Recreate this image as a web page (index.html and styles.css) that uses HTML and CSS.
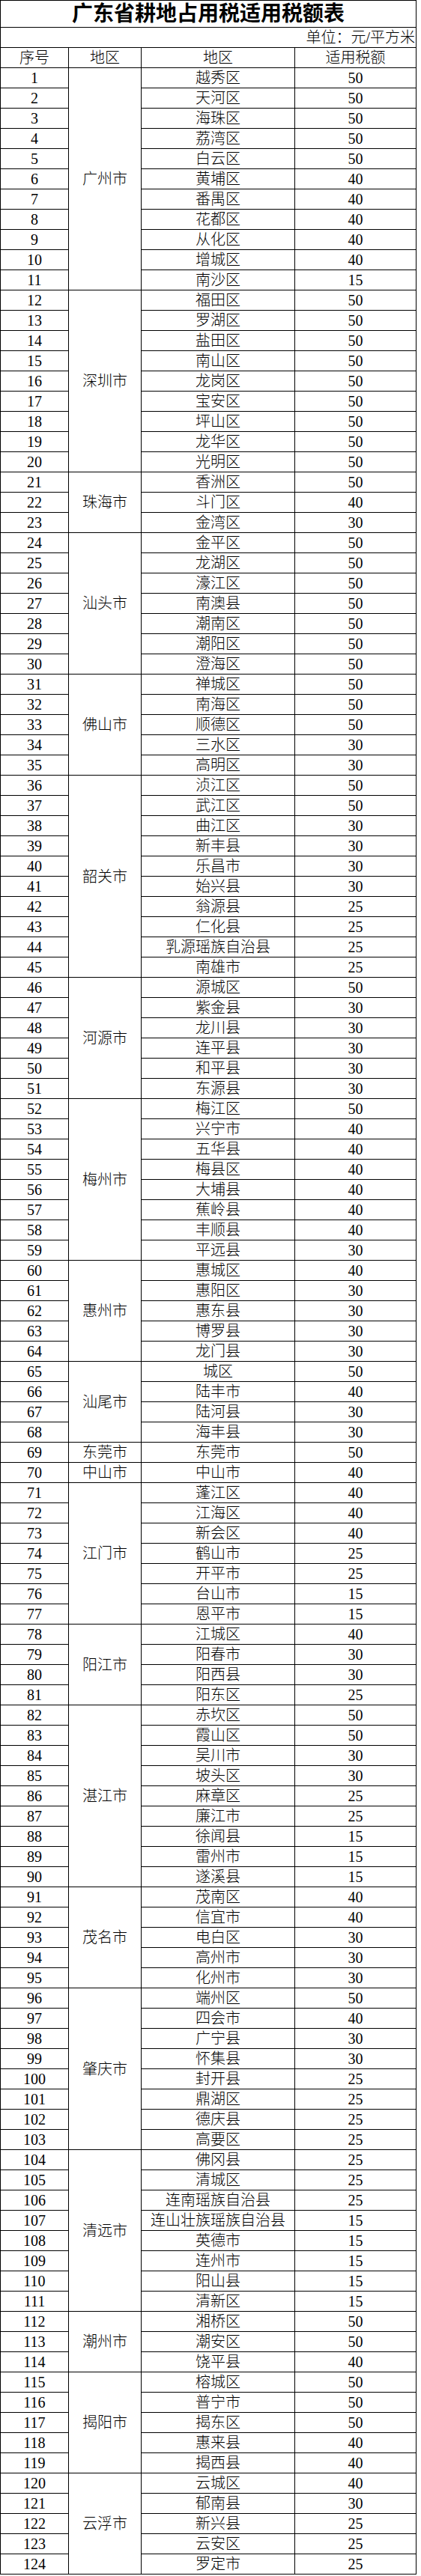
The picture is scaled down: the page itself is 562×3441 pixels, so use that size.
FILE: index.html
```html
<!DOCTYPE html>
<html lang="zh-CN">
<head>
<meta charset="utf-8">
<title>广东省耕地占用税适用税额表</title>
<link rel="stylesheet" href="styles.css">
</head>
<body>
<table class="sheet">
<colgroup><col class="c-no"><col class="c-city"><col class="c-dist"><col class="c-rate"></colgroup>
<tr class="r-title"><td colspan="4" class="title">广东省耕地占用税适用税额表</td></tr>
<tr class="r-unit"><td colspan="4" class="unit">单位：元/平方米</td></tr>
<tr class="r-head"><td>序号</td><td>地区</td><td>地区</td><td>适用税额</td></tr>
<tr><td class="num">1</td><td class="city" rowspan="11">广州市</td><td>越秀区</td><td class="num">50</td></tr>
<tr><td class="num">2</td><td>天河区</td><td class="num">50</td></tr>
<tr><td class="num">3</td><td>海珠区</td><td class="num">50</td></tr>
<tr><td class="num">4</td><td>荔湾区</td><td class="num">50</td></tr>
<tr><td class="num">5</td><td>白云区</td><td class="num">50</td></tr>
<tr><td class="num">6</td><td>黄埔区</td><td class="num">40</td></tr>
<tr><td class="num">7</td><td>番禺区</td><td class="num">40</td></tr>
<tr><td class="num">8</td><td>花都区</td><td class="num">40</td></tr>
<tr><td class="num">9</td><td>从化区</td><td class="num">40</td></tr>
<tr><td class="num">10</td><td>增城区</td><td class="num">40</td></tr>
<tr><td class="num">11</td><td>南沙区</td><td class="num">15</td></tr>
<tr><td class="num">12</td><td class="city" rowspan="9">深圳市</td><td>福田区</td><td class="num">50</td></tr>
<tr><td class="num">13</td><td>罗湖区</td><td class="num">50</td></tr>
<tr><td class="num">14</td><td>盐田区</td><td class="num">50</td></tr>
<tr><td class="num">15</td><td>南山区</td><td class="num">50</td></tr>
<tr><td class="num">16</td><td>龙岗区</td><td class="num">50</td></tr>
<tr><td class="num">17</td><td>宝安区</td><td class="num">50</td></tr>
<tr><td class="num">18</td><td>坪山区</td><td class="num">50</td></tr>
<tr><td class="num">19</td><td>龙华区</td><td class="num">50</td></tr>
<tr><td class="num">20</td><td>光明区</td><td class="num">50</td></tr>
<tr><td class="num">21</td><td class="city" rowspan="3">珠海市</td><td>香洲区</td><td class="num">50</td></tr>
<tr><td class="num">22</td><td>斗门区</td><td class="num">40</td></tr>
<tr><td class="num">23</td><td>金湾区</td><td class="num">30</td></tr>
<tr><td class="num">24</td><td class="city" rowspan="7">汕头市</td><td>金平区</td><td class="num">50</td></tr>
<tr><td class="num">25</td><td>龙湖区</td><td class="num">50</td></tr>
<tr><td class="num">26</td><td>濠江区</td><td class="num">50</td></tr>
<tr><td class="num">27</td><td>南澳县</td><td class="num">50</td></tr>
<tr><td class="num">28</td><td>潮南区</td><td class="num">50</td></tr>
<tr><td class="num">29</td><td>潮阳区</td><td class="num">50</td></tr>
<tr><td class="num">30</td><td>澄海区</td><td class="num">50</td></tr>
<tr><td class="num">31</td><td class="city" rowspan="5">佛山市</td><td>禅城区</td><td class="num">50</td></tr>
<tr><td class="num">32</td><td>南海区</td><td class="num">50</td></tr>
<tr><td class="num">33</td><td>顺德区</td><td class="num">50</td></tr>
<tr><td class="num">34</td><td>三水区</td><td class="num">30</td></tr>
<tr><td class="num">35</td><td>高明区</td><td class="num">30</td></tr>
<tr><td class="num">36</td><td class="city" rowspan="10">韶关市</td><td>浈江区</td><td class="num">50</td></tr>
<tr><td class="num">37</td><td>武江区</td><td class="num">50</td></tr>
<tr><td class="num">38</td><td>曲江区</td><td class="num">30</td></tr>
<tr><td class="num">39</td><td>新丰县</td><td class="num">30</td></tr>
<tr><td class="num">40</td><td>乐昌市</td><td class="num">30</td></tr>
<tr><td class="num">41</td><td>始兴县</td><td class="num">30</td></tr>
<tr><td class="num">42</td><td>翁源县</td><td class="num">25</td></tr>
<tr><td class="num">43</td><td>仁化县</td><td class="num">25</td></tr>
<tr><td class="num">44</td><td>乳源瑶族自治县</td><td class="num">25</td></tr>
<tr><td class="num">45</td><td>南雄市</td><td class="num">25</td></tr>
<tr><td class="num">46</td><td class="city" rowspan="6">河源市</td><td>源城区</td><td class="num">50</td></tr>
<tr><td class="num">47</td><td>紫金县</td><td class="num">30</td></tr>
<tr><td class="num">48</td><td>龙川县</td><td class="num">30</td></tr>
<tr><td class="num">49</td><td>连平县</td><td class="num">30</td></tr>
<tr><td class="num">50</td><td>和平县</td><td class="num">30</td></tr>
<tr><td class="num">51</td><td>东源县</td><td class="num">30</td></tr>
<tr><td class="num">52</td><td class="city" rowspan="8">梅州市</td><td>梅江区</td><td class="num">50</td></tr>
<tr><td class="num">53</td><td>兴宁市</td><td class="num">40</td></tr>
<tr><td class="num">54</td><td>五华县</td><td class="num">40</td></tr>
<tr><td class="num">55</td><td>梅县区</td><td class="num">40</td></tr>
<tr><td class="num">56</td><td>大埔县</td><td class="num">40</td></tr>
<tr><td class="num">57</td><td>蕉岭县</td><td class="num">40</td></tr>
<tr><td class="num">58</td><td>丰顺县</td><td class="num">40</td></tr>
<tr><td class="num">59</td><td>平远县</td><td class="num">30</td></tr>
<tr><td class="num">60</td><td class="city" rowspan="5">惠州市</td><td>惠城区</td><td class="num">40</td></tr>
<tr><td class="num">61</td><td>惠阳区</td><td class="num">30</td></tr>
<tr><td class="num">62</td><td>惠东县</td><td class="num">30</td></tr>
<tr><td class="num">63</td><td>博罗县</td><td class="num">30</td></tr>
<tr><td class="num">64</td><td>龙门县</td><td class="num">30</td></tr>
<tr><td class="num">65</td><td class="city" rowspan="4">汕尾市</td><td>城区</td><td class="num">50</td></tr>
<tr><td class="num">66</td><td>陆丰市</td><td class="num">40</td></tr>
<tr><td class="num">67</td><td>陆河县</td><td class="num">30</td></tr>
<tr><td class="num">68</td><td>海丰县</td><td class="num">30</td></tr>
<tr><td class="num">69</td><td class="city">东莞市</td><td>东莞市</td><td class="num">50</td></tr>
<tr><td class="num">70</td><td class="city">中山市</td><td>中山市</td><td class="num">40</td></tr>
<tr><td class="num">71</td><td class="city" rowspan="7">江门市</td><td>蓬江区</td><td class="num">40</td></tr>
<tr><td class="num">72</td><td>江海区</td><td class="num">40</td></tr>
<tr><td class="num">73</td><td>新会区</td><td class="num">40</td></tr>
<tr><td class="num">74</td><td>鹤山市</td><td class="num">25</td></tr>
<tr><td class="num">75</td><td>开平市</td><td class="num">25</td></tr>
<tr><td class="num">76</td><td>台山市</td><td class="num">15</td></tr>
<tr><td class="num">77</td><td>恩平市</td><td class="num">15</td></tr>
<tr><td class="num">78</td><td class="city" rowspan="4">阳江市</td><td>江城区</td><td class="num">40</td></tr>
<tr><td class="num">79</td><td>阳春市</td><td class="num">30</td></tr>
<tr><td class="num">80</td><td>阳西县</td><td class="num">30</td></tr>
<tr><td class="num">81</td><td>阳东区</td><td class="num">25</td></tr>
<tr><td class="num">82</td><td class="city" rowspan="9">湛江市</td><td>赤坎区</td><td class="num">50</td></tr>
<tr><td class="num">83</td><td>霞山区</td><td class="num">50</td></tr>
<tr><td class="num">84</td><td>吴川市</td><td class="num">30</td></tr>
<tr><td class="num">85</td><td>坡头区</td><td class="num">30</td></tr>
<tr><td class="num">86</td><td>麻章区</td><td class="num">25</td></tr>
<tr><td class="num">87</td><td>廉江市</td><td class="num">25</td></tr>
<tr><td class="num">88</td><td>徐闻县</td><td class="num">15</td></tr>
<tr><td class="num">89</td><td>雷州市</td><td class="num">15</td></tr>
<tr><td class="num">90</td><td>遂溪县</td><td class="num">15</td></tr>
<tr><td class="num">91</td><td class="city" rowspan="5">茂名市</td><td>茂南区</td><td class="num">40</td></tr>
<tr><td class="num">92</td><td>信宜市</td><td class="num">40</td></tr>
<tr><td class="num">93</td><td>电白区</td><td class="num">30</td></tr>
<tr><td class="num">94</td><td>高州市</td><td class="num">30</td></tr>
<tr><td class="num">95</td><td>化州市</td><td class="num">30</td></tr>
<tr><td class="num">96</td><td class="city" rowspan="8">肇庆市</td><td>端州区</td><td class="num">50</td></tr>
<tr><td class="num">97</td><td>四会市</td><td class="num">40</td></tr>
<tr><td class="num">98</td><td>广宁县</td><td class="num">30</td></tr>
<tr><td class="num">99</td><td>怀集县</td><td class="num">30</td></tr>
<tr><td class="num">100</td><td>封开县</td><td class="num">25</td></tr>
<tr><td class="num">101</td><td>鼎湖区</td><td class="num">25</td></tr>
<tr><td class="num">102</td><td>德庆县</td><td class="num">25</td></tr>
<tr><td class="num">103</td><td>高要区</td><td class="num">25</td></tr>
<tr><td class="num">104</td><td class="city" rowspan="8">清远市</td><td>佛冈县</td><td class="num">25</td></tr>
<tr><td class="num">105</td><td>清城区</td><td class="num">25</td></tr>
<tr><td class="num">106</td><td>连南瑶族自治县</td><td class="num">25</td></tr>
<tr><td class="num">107</td><td>连山壮族瑶族自治县</td><td class="num">15</td></tr>
<tr><td class="num">108</td><td>英德市</td><td class="num">15</td></tr>
<tr><td class="num">109</td><td>连州市</td><td class="num">15</td></tr>
<tr><td class="num">110</td><td>阳山县</td><td class="num">15</td></tr>
<tr><td class="num">111</td><td>清新区</td><td class="num">15</td></tr>
<tr><td class="num">112</td><td class="city" rowspan="3">潮州市</td><td>湘桥区</td><td class="num">50</td></tr>
<tr><td class="num">113</td><td>潮安区</td><td class="num">50</td></tr>
<tr><td class="num">114</td><td>饶平县</td><td class="num">40</td></tr>
<tr><td class="num">115</td><td class="city" rowspan="5">揭阳市</td><td>榕城区</td><td class="num">50</td></tr>
<tr><td class="num">116</td><td>普宁市</td><td class="num">50</td></tr>
<tr><td class="num">117</td><td>揭东区</td><td class="num">50</td></tr>
<tr><td class="num">118</td><td>惠来县</td><td class="num">40</td></tr>
<tr><td class="num">119</td><td>揭西县</td><td class="num">40</td></tr>
<tr><td class="num">120</td><td class="city" rowspan="5">云浮市</td><td>云城区</td><td class="num">40</td></tr>
<tr><td class="num">121</td><td>郁南县</td><td class="num">30</td></tr>
<tr><td class="num">122</td><td>新兴县</td><td class="num">25</td></tr>
<tr><td class="num">123</td><td>云安区</td><td class="num">25</td></tr>
<tr><td class="num">124</td><td>罗定市</td><td class="num">25</td></tr>
</table>
</body>
</html>
```
FILE: styles.css
```css
html, body {
  margin: 0;
  padding: 0;
  background: #ffffff;
}
body {
  width: 562px;
  color: #000000;
  font-family: "Liberation Serif", "Noto Sans CJK SC", serif;
}
.sheet {
  border-collapse: collapse;
  table-layout: fixed;
  width: 556px;
  font-size: 20px;
  line-height: 22px;
  font-weight: 300;
}
.c-no { width: 91px; }
.c-city { width: 97px; }
.c-dist { width: 205px; }
.c-rate { width: 162px; }
.sheet td {
  border: 1px solid #000000;
  padding: 0;
  text-align: center;
  vertical-align: middle;
  white-space: nowrap;
  overflow: hidden;
}
.sheet tr {
  height: 27px;
}
.sheet tr.r-title {
  height: 36px;
}
.title {
  font-size: 28px;
  line-height: 30px;
  font-weight: 700;
}
.unit {
  text-align: right !important;
  padding-right: 1px !important;
}
.num {
  font-family: "Liberation Serif", serif;
  font-weight: 400;
}
```
